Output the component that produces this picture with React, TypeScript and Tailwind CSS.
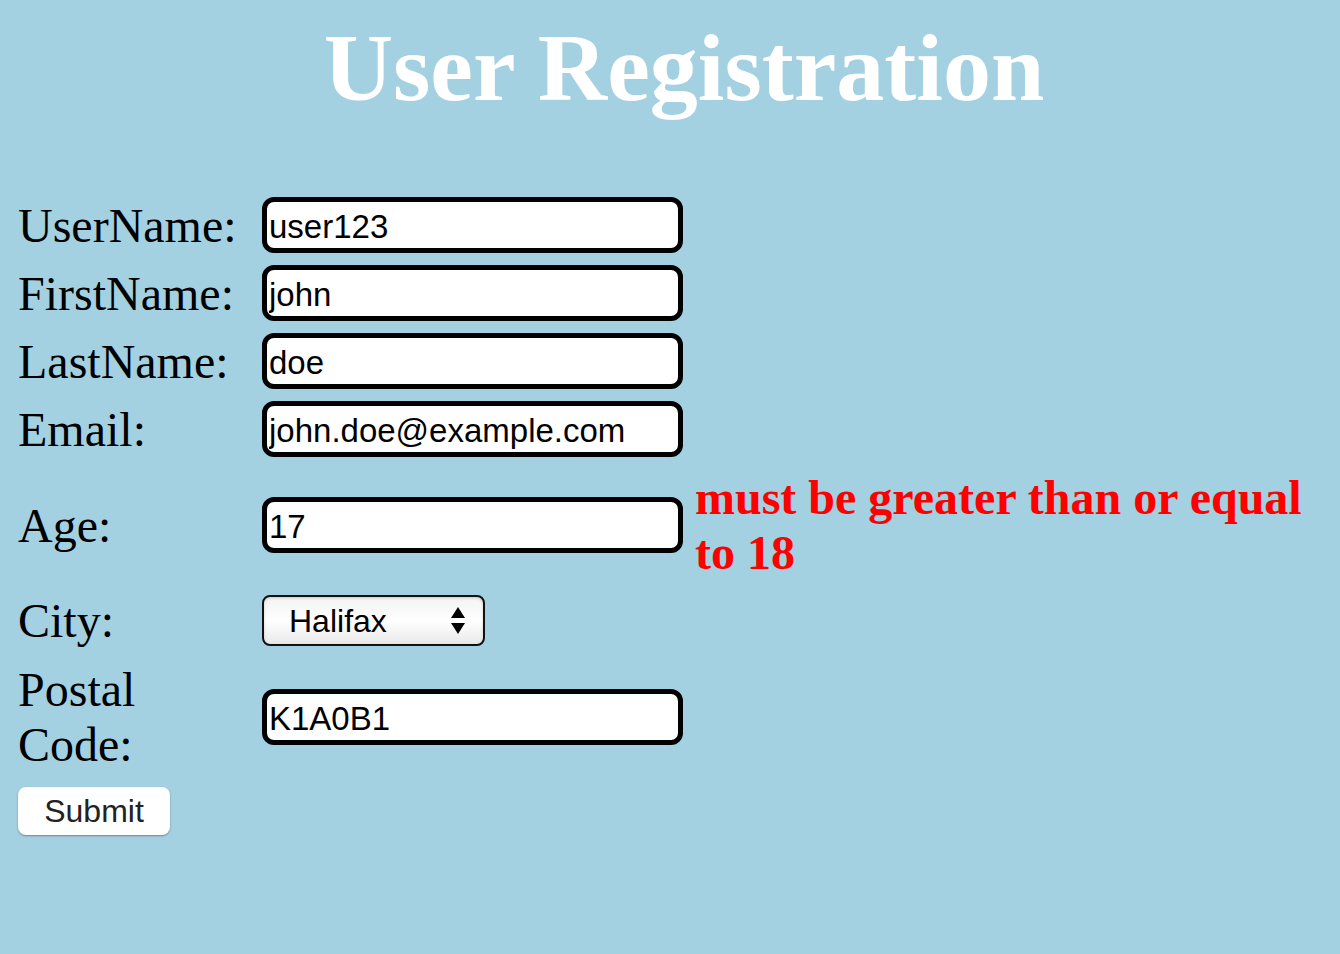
import React from "react";

const serif = { fontFamily: '"Liberation Serif", "Times New Roman", serif' };
const sans = { fontFamily: '"Liberation Sans", Arial, sans-serif' };

function TextInput({ value }: { value: string }) {
  return (
    <input
      readOnly
      value={value}
      style={sans}
      className="w-[421px] h-[56px] shrink-0 rounded-[12px] border-[5px] border-black bg-white pl-[2px] pt-[3px] text-[33px] leading-none text-black outline-none"
    />
  );
}

function Label({ children }: { children: React.ReactNode }) {
  return (
    <div style={serif} className="w-[262px] shrink-0 pl-[18px] text-[48px] leading-[55px] text-black">
      {children}
    </div>
  );
}

export default function App() {
  return (
    <div className="min-h-screen w-full bg-[#a3d1e2]">
      <h1
        style={serif}
        className="pl-[28px] pt-[13px] text-center text-[96px] font-bold leading-[110px] text-white"
      >
        User Registration
      </h1>

      <form className="mt-[68px] flex flex-col">
        <div className="flex h-[68px] items-center">
          <Label>UserName:</Label>
          <TextInput value="user123" />
        </div>
        <div className="flex h-[68px] items-center">
          <Label>FirstName:</Label>
          <TextInput value="john" />
        </div>
        <div className="flex h-[68px] items-center">
          <Label>LastName:</Label>
          <TextInput value="doe" />
        </div>
        <div className="flex h-[68px] items-center">
          <Label>Email:</Label>
          <TextInput value="john.doe@example.com" />
        </div>
        <div className="flex h-[124px] items-center">
          <Label>Age:</Label>
          <TextInput value="17" />
          <div
            style={serif}
            className="ml-[12px] flex-1 pr-[2px] text-[48px] font-bold leading-[55px] text-[#ff0000]"
          >
            must be greater than or equal to 18
          </div>
        </div>
        <div className="flex h-[67px] items-center">
          <Label>City:</Label>
          <div className="relative h-[51px] w-[223px] shrink-0">
            <select
              style={sans}
              defaultValue="Halifax"
              className="h-full w-full appearance-none rounded-[8px] border-[2px] border-[#111] bg-gradient-to-b from-[#f3f3f3] via-[#ffffff] to-[#e9e9e9] pl-[25px] text-[32px] leading-none text-black shadow-[inset_0_1px_3px_rgba(0,0,0,0.18)] outline-none"
            >
              <option>Halifax</option>
              <option>Toronto</option>
              <option>Ottawa</option>
            </select>
            <svg
              className="pointer-events-none absolute right-[19px] top-[10px]"
              width="16"
              height="32"
              viewBox="0 0 16 32"
            >
              <polygon points="8,2 15,13 1,13" fill="#000" />
              <polygon points="1,18 15,18 8,29" fill="#000" />
            </svg>
          </div>
        </div>
        <div className="flex h-[126px] items-center">
          <Label>
            Postal
            <br />
            Code:
          </Label>
          <TextInput value="K1A0B1" />
        </div>
        <div className="pl-[18px] pt-[7px]">
          <button
            type="button"
            style={sans}
            className="h-[48px] w-[152px] rounded-[8px] bg-white text-[32px] leading-none text-[#222] shadow-[0_1px_2px_rgba(0,0,0,0.35)]"
          >
            Submit
          </button>
        </div>
      </form>
    </div>
  );
}
